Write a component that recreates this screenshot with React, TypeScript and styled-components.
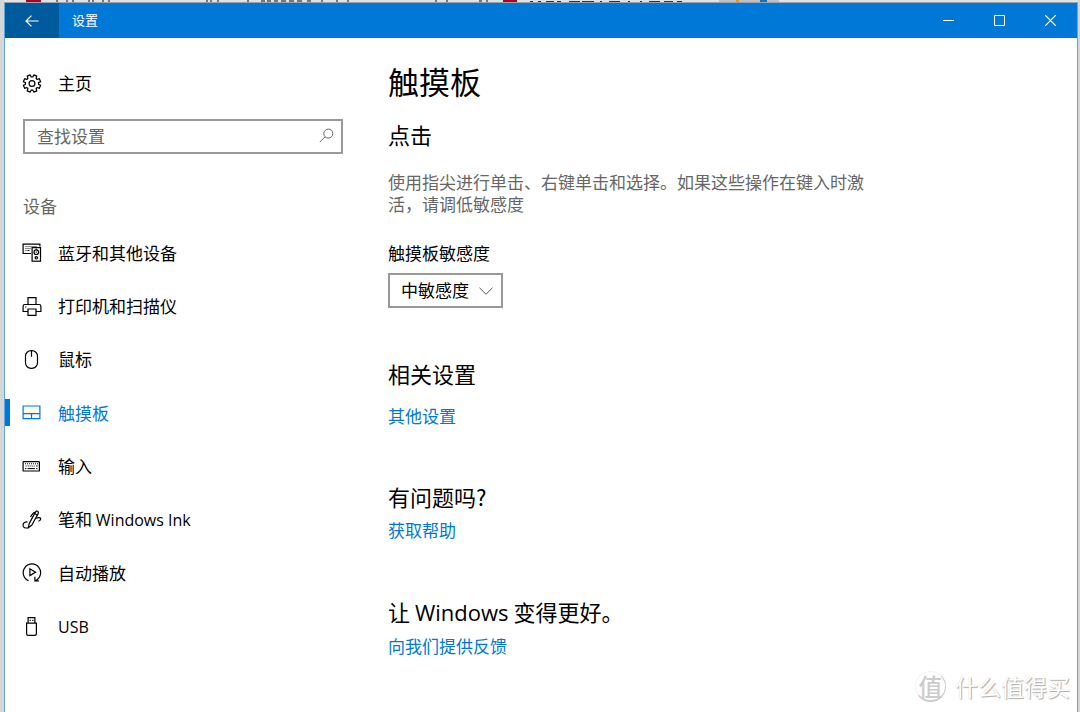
import React from "react";
import styled, { createGlobalStyle } from "styled-components";

const accent = "#0078d7";

const GlobalStyle = createGlobalStyle`
  *, *::before, *::after { box-sizing: border-box; }
  body {
    margin: 0;
    background: #d6d6d6;
    color: #000;
    font-family: "Noto Sans CJK SC", "Open Sans", sans-serif;
    font-size: 17px;
    line-height: 22px;
  }
  button, input, select { font: inherit; color: inherit; }
  h1, h2, p, ul { margin: 0; padding: 0; font-weight: 400; }
`;

const Desktop = styled.div`
  min-height: 100vh;
  display: flex;
  flex-direction: column;
  padding: 0 2px 0 4px;
`;

const BrowserStrip = styled.div`
  height: 3px;
  flex: none;
  overflow: hidden;
  background: #e2e2e2;
  border-bottom: 1px solid #9aa4ad;
`;

const Window = styled.div`
  position: relative;
  flex: 1;
  display: flex;
  flex-direction: column;
  background: #fff;
  border: solid #5aa9e6;
  border-width: 0 1px;
`;

const TitleBar = styled.header`
  display: flex;
  align-items: stretch;
  height: 35px;
  padding-right: 1px;
  background: ${accent};
  color: #fff;
`;

const BackButton = styled.button`
  width: 54px;
  border: 0;
  padding: 0;
  display: grid;
  place-items: center;
  background: #005a9e;
`;

const WindowTitle = styled.span`
  flex: 1;
  padding-left: 13px;
  font-size: 13px;
  line-height: 34px;
`;

const CaptionButton = styled.button`
  width: 51px;
  border: 0;
  padding: 0;
  display: grid;
  place-items: center;
  background: transparent;
`;

const Body = styled.div`
  flex: 1;
  display: flex;
`;

const Sidebar = styled.aside`
  flex: none;
  width: 338px;
  padding-top: 33px;
`;

const navRow = `
  display: flex;
  align-items: center;
  gap: 16px;
  padding-left: 17px;
  text-decoration: none;
`;

const HomeLink = styled.a`
  ${navRow}
  height: 24px;
  color: #000;
`;

const SearchBox = styled.label`
  display: flex;
  align-items: center;
  height: 35px;
  margin: 24px 0 0 18px;
  padding: 0 7px 2px 12px;
  border: 2px solid #999;
  color: #666;
`;

const SearchInput = styled.input`
  flex: 1;
  min-width: 0;
  border: 0;
  outline: 0;
  padding: 0;
  background: transparent;
  &::placeholder { color: #666; opacity: 1; }
`;

const GroupTitle = styled.h2`
  margin: 41px 0 9px 18px;
  font-size: 17px;
  line-height: 22px;
  color: #666;
`;

const NavList = styled.ul`
  list-style: none;
  display: grid;
  grid-auto-rows: 1fr;
  min-height: 427px;
`;

const NavItem = styled.li`
  display: grid;
`;

const NavLink = styled.a<{ $active?: boolean }>`
  ${navRow}
  position: relative;
  color: ${(p) => (p.$active ? accent : "#000")};
  &::before {
    content: "";
    display: ${(p) => (p.$active ? "block" : "none")};
    position: absolute;
    left: 0;
    width: 5px;
    height: 27px;
    background: ${accent};
  }
`;

const NavText = styled.span``;

const Latin = styled.span<{ $size: number }>`
  font-family: "Open Sans", sans-serif;
  font-size: ${(p) => p.$size}px;
`;

const Content = styled.main`
  flex: 1;
  min-width: 0;
  padding: 23px 24px 54px 45px;
`;

const PageTitle = styled.h1`
  font-size: 31px;
  line-height: 40px;
`;

const Section = styled.section<{ $top: number }>`
  margin-top: ${(p) => p.$top}px;
`;

const SectionTitle = styled.h2`
  font-size: 22px;
  line-height: 30px;
`;

const Description = styled.p`
  max-width: 480px;
  margin-top: 22px;
  color: #666;
`;

const FieldLabel = styled.label`
  display: block;
  margin: 27px 0 9px;
`;

const SelectWrap = styled.div`
  position: relative;
  width: 115px;
`;

const Select = styled.select`
  appearance: none;
  display: block;
  width: 100%;
  height: 35px;
  padding: 0 0 2px 11px;
  border: 2px solid #999;
  border-radius: 0;
  background: #fff;
`;

const SelectArrow = styled.svg`
  position: absolute;
  right: 10px;
  top: 14px;
  pointer-events: none;
`;

const TextLink = styled.a<{ $top: number }>`
  display: table;
  margin-top: ${(p) => p.$top}px;
  color: ${accent};
  text-decoration: none;
`;

const Watermark = styled.div`
  position: absolute;
  right: 7px;
  bottom: 10px;
  display: flex;
  align-items: center;
  gap: 9px;
  color: #fff;
  font-size: 23px;
  line-height: 32px;
  text-shadow: 1px 1px 1px #aaa, 0 0 1px #ccc;
`;

const WatermarkBadge = styled.span`
  width: 31px;
  height: 31px;
  border-radius: 50%;
  border: 1px solid #f4f4f4;
  border-right-color: #ccc;
  border-bottom: 2px solid #ccc;
  display: grid;
  place-items: center;
  font-size: 24px;
  line-height: 28px;
  font-weight: 500;
  color: #ccc;
  text-shadow: none;
`;

const Svg = styled.svg`
  flex: none;
  display: block;
  fill: none;
  stroke: currentColor;
`;

const StripArt = styled.svg`
  display: block;
`;

type IconProps = { children: React.ReactNode };

const NavIcon = ({ children }: IconProps) => (
  <Svg width="20" height="19" viewBox="-0.5 0 20 19" strokeWidth="1.2" aria-hidden="true">
    {children}
  </Svg>
);

const gearPath = (() => {
  const points: string[] = [];
  const teeth = 8;
  for (let i = 0; i < teeth; i++) {
    const steps: [number, number][] = [
      [-0.26, 6.6],
      [-0.19, 8.8],
      [0.19, 8.8],
      [0.26, 6.6],
    ];
    for (const [offset, radius] of steps) {
      const angle = ((i + 0.5) * 2 * Math.PI) / teeth + offset;
      points.push(`${(9.5 + radius * Math.cos(angle)).toFixed(2)} ${(9.5 + radius * Math.sin(angle)).toFixed(2)}`);
    }
  }
  return `M${points.join("L")}Z`;
})();

const icons = {
  home: (
    <>
      <path d={gearPath} strokeLinejoin="round" />
      <circle cx="9.5" cy="9.5" r="2.9" />
    </>
  ),
  devices: (
    <>
      <path d="M8.5 10.5H.6V1.1h16.8v2.4" />
      <path d="M3 3.6h1M5 3.6h1M7 3.6h1M9 3.6h1M11 3.6h1M13 3.6h1M3 5.6h1M5 5.6h1M3 7.6h1M5 7.6h2M7 5.6h1" strokeWidth="1" />
      <rect x="9.6" y="4.6" width="8.4" height="13.6" />
      <circle cx="13.8" cy="9.2" r="2.3" />
      <circle cx="13.8" cy="14.8" r="1.2" />
      <path d="M13.3 9.2h1M13.3 6.1h1" />
    </>
  ),
  printer: (
    <>
      <path d="M5.5 7.5v-6.9h8v6.9M5.5 14.5H.6v-5.2q0-1.8 1.8-1.8h14.2q1.8 0 1.8 1.8v5.2h-4.9" />
      <path d="M5.5 12h8v6.4h-8z" />
      <path d="M2.7 10h1.2" />
    </>
  ),
  mouse: (
    <>
      <rect x="3" y="0.6" width="12" height="17.8" rx="5.6" />
      <path d="M9 .6v6.2" />
    </>
  ),
  touchpad: <path d="M.6 3h16.8v12.6H.6zM.6 10.7h16.8M9 10.7v4.9" />,
  keyboard: (
    <>
      <rect x="0.6" y="4.6" width="16.3" height="9.4" rx="0.6" />
      <path d="M2.5 6.8h1M4.5 6.8h1M6.5 6.8h1M8.5 6.8h1M10.5 6.8h1M12.5 6.8h1M14.5 6.8h1M3.2 9h1M5.2 9h1M7.2 9h1M9.2 9h1M11.2 9h1M13.5 9h1.6M2.5 11.6h1.4M5 11.6h7.4M13.6 11.6h1.4" strokeWidth="1" />
    </>
  ),
  pen: (
    <>
      <path d="M5.8 17.8l.9-4.2L12.6 2.6q1.2-2.2 2.6-1.4 1.3.8.2 2.9L9.4 15z" strokeLinejoin="round" />
      <path d="M12.2 3.4l2.6 1.5M12.6 2.4Q10.6 2.4 8 7" />
      <path d="M5.8 17.8q-4 .8-5-1.4-.9-2.4 1.2-3.9 1.6-1 3-.4M13.6 8.2q3.6-1.4 4.5.2.6 1.6-2.2 2.8" />
    </>
  ),
  autoplay: (
    <>
      <path d="M6 17.6a8.7 8.7 0 1 1 6.8 0" />
      <path d="M12.4 13.8v4.1h4.1" />
      <path d="M7.4 5.8v6.8l5.6-3.4z" />
    </>
  ),
  usb: (
    <>
      <path d="M4.1 6.1h9.8v10.6q0 1.7-1.7 1.7H5.8q-1.7 0-1.7-1.7z" />
      <path d="M5.6 6.1V.6h6.8v5.5M7.1 3.3h1.2M9.8 3.3H11" />
    </>
  ),
};

const navItems: { icon: keyof typeof icons; text: string; latin?: string }[] = [
  { icon: "devices", text: "蓝牙和其他设备" },
  { icon: "printer", text: "打印机和扫描仪" },
  { icon: "mouse", text: "鼠标" },
  { icon: "touchpad", text: "触摸板" },
  { icon: "keyboard", text: "输入" },
  { icon: "pen", text: "笔和 ", latin: "Windows Ink" },
  { icon: "autoplay", text: "自动播放" },
  { icon: "usb", text: "", latin: "USB" },
];

export default function App() {
  return (
    <>
      <GlobalStyle />
      <Desktop>
        <BrowserStrip aria-hidden="true">
          <StripArt width="800" height="2" viewBox="0 0 800 2" fill="none">
            <path d="M22 1h15M499 1h14" stroke="#b00020" strokeWidth="2" />
            <path d="M715 1h60" stroke="#c0c0c0" strokeWidth="2" />
            <path
              d="M52 1h2M62 1h2M68 1h2M84 1h2M88 1h2M98 1h2M104 1h2M202 1h2M206 1h2M213 1h2M243 1h2M257 1h4M263 1h4M270 1h4M277 1h5M285 1h5M293 1h5M303 1h4M317 1h2M332 1h2M343 1h2M431 1h2M442 1h2M475 1h3M482 1h2"
              stroke="#777"
              strokeWidth="2"
            />
            <path
              d="M526 1.5h3M534 1.5h3M542 1.5h8M553 1.5h4M565 1.5h11M578 1.5h12M596 1.5h2M605 1.5h11M624 1.5h2M636 1.5h2M645 1.5h11M660 1.5h9M673 1.5h5"
              stroke="#333"
            />
            <path d="M732 1h3" stroke="#d99b2b" strokeWidth="2" />
            <path d="M756 1h7" stroke="#1670b8" strokeWidth="2" />
          </StripArt>
        </BrowserStrip>
        <Window>
          <TitleBar>
            <BackButton aria-label="返回">
              <Svg width="14" height="12" viewBox="0 0 14 12" strokeWidth="1.2">
                <path d="M13.5 6H1M6.4.6L1 6l5.4 5.4" />
              </Svg>
            </BackButton>
            <WindowTitle>设置</WindowTitle>
            <CaptionButton aria-label="最小化">
              <Svg width="11" height="11" viewBox="0 0 11 11">
                <path d="M0 5.5h11" />
              </Svg>
            </CaptionButton>
            <CaptionButton aria-label="最大化">
              <Svg width="11" height="11" viewBox="0 0 11 11">
                <path d="M.5.5h10v10H.5z" />
              </Svg>
            </CaptionButton>
            <CaptionButton aria-label="关闭">
              <Svg width="11" height="11" viewBox="0 0 11 11" strokeWidth="1.2">
                <path d="M.3.3l10.4 10.4M10.7.3L.3 10.7" />
              </Svg>
            </CaptionButton>
          </TitleBar>
          <Body>
            <Sidebar>
              <HomeLink href="#home">
                <NavIcon>{icons.home}</NavIcon>
                主页
              </HomeLink>
              <SearchBox>
                <SearchInput type="text" placeholder="查找设置" aria-label="查找设置" />
                <Svg width="15" height="15" viewBox="0 0 15 15" aria-hidden="true">
                  <circle cx="9.3" cy="5.6" r="4.5" />
                  <path d="M6 8.9L.8 14.1" />
                </Svg>
              </SearchBox>
              <GroupTitle>设备</GroupTitle>
              <NavList>
                {navItems.map((item) => (
                  <NavItem key={item.icon}>
                    <NavLink
                      href={`#${item.icon}`}
                      $active={item.icon === "touchpad"}
                      aria-current={item.icon === "touchpad" ? "page" : undefined}
                    >
                      <NavIcon>{icons[item.icon]}</NavIcon>
                      <NavText>
                        {item.text}
                        {item.latin && <Latin $size={16}>{item.latin}</Latin>}
                      </NavText>
                    </NavLink>
                  </NavItem>
                ))}
              </NavList>
            </Sidebar>
            <Content>
              <PageTitle>触摸板</PageTitle>
              <Section $top={18}>
                <SectionTitle>点击</SectionTitle>
                <Description>
                  使用指尖进行单击、右键单击和选择。如果这些操作在键入时激活，请调低敏感度
                </Description>
                <FieldLabel htmlFor="sensitivity">触摸板敏感度</FieldLabel>
                <SelectWrap>
                  <Select id="sensitivity" defaultValue="medium">
                    <option value="medium">中敏感度</option>
                  </Select>
                  <SelectArrow width="14" height="8" viewBox="0 0 14 8" fill="none" stroke="#555" aria-hidden="true">
                    <path d="M.5.8L7 7.2 13.5.8" />
                  </SelectArrow>
                </SelectWrap>
              </Section>
              <Section $top={50}>
                <SectionTitle>相关设置</SectionTitle>
                <TextLink $top={17} href="#more">其他设置</TextLink>
              </Section>
              <Section $top={54}>
                <SectionTitle>有问题吗?</SectionTitle>
                <TextLink $top={8} href="#help">获取帮助</TextLink>
              </Section>
              <Section $top={55}>
                <SectionTitle>
                  让 <Latin $size={22}>Windows</Latin> 变得更好。
                </SectionTitle>
                <TextLink $top={8} href="#feedback">向我们提供反馈</TextLink>
              </Section>
            </Content>
          </Body>
          <Watermark>
            <WatermarkBadge>值</WatermarkBadge>
            什么值得买
          </Watermark>
        </Window>
      </Desktop>
    </>
  );
}
